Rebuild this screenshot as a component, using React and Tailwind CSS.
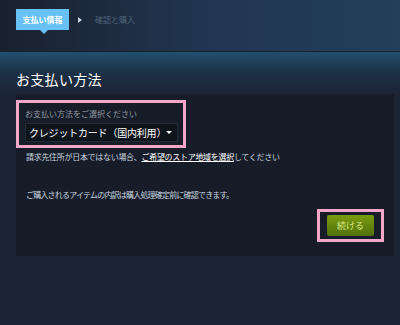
export default function App() {
  const font = { fontFamily: '"Noto Sans CJK JP", "Noto Sans", sans-serif' };
  return (
    <div
      className="w-[400px] h-[325px] overflow-hidden bg-[#1b2535] text-[#c6d4df]"
      style={font}
    >
      {/* step bar */}
      <div className="h-[52px] bg-gradient-to-r from-[#19212e] via-[#213550] to-[#233f5a] border-b border-[#18222f] flex items-start pl-4 pt-[9px]">
        <div className="relative h-[21px] w-[53px] bg-[#67c1f5] flex items-center justify-center text-[8px] font-bold text-white leading-none">
          支払い情報
          <span className="absolute left-[24px] -bottom-[4px] w-0 h-0 border-l-[4px] border-r-[4px] border-t-[4px] border-l-transparent border-r-transparent border-t-[#67c1f5]" />
        </div>
        <div className="h-[21px] flex items-center ml-[9px]">
          <span className="w-0 h-0 border-t-[3px] border-b-[3px] border-l-[4px] border-t-transparent border-b-transparent border-l-[#c6d4df]" />
        </div>
        <div className="h-[21px] flex items-center ml-[13px] text-[8px] text-[#4f6378] leading-none">
          確認と購入
        </div>
      </div>

      {/* heading */}
      <div className="h-[42px] bg-gradient-to-b from-[#21506f] via-[#1c3046] to-[#1b2535] pl-4 flex items-end pb-[8px]">
        <h1 className="text-[14px] leading-none text-white tracking-[0.3px]">お支払い方法</h1>
      </div>

      {/* panel */}
      <div className="ml-4 mr-[6px] h-[162px] bg-[#161d29] pt-[6px] flex flex-col">
        <div className="w-[170px] h-[48px] border-[3px] border-[#f3a6c9] pl-[6px] pt-[5px]">
          <div className="text-[8px] leading-[12px] text-[#8f98a0]">お支払い方法をご選択ください</div>
          <div className="mt-[3px] w-[153px] h-[19px] bg-[#0e141c] border border-[#232d3a] flex items-center pl-[3px] pr-[5px] justify-between">
            <span className="text-[10px] leading-none text-white tracking-[-0.2px]">クレジットカード（国内利用）</span>
            <span className="w-0 h-0 border-l-[3px] border-r-[3px] border-t-[3px] border-l-transparent border-r-transparent border-t-white" />
          </div>
        </div>
        <p className="mt-[3px] pl-[10px] text-[8px] leading-[12px] tracking-[-0.3px]">
          請求先住所が日本ではない場合、
          <span className="text-white underline">ご希望のストア地域を選択</span>
          してください
        </p>
        <p className="mt-[26px] pl-[10px] text-[8px] leading-[12px] tracking-[-0.8px]">
          ご購入されるアイテムの内訳は購入処理確定前に確認できます。
        </p>
        <div className="mt-[8px] flex justify-end pr-[10px]">
          <div className="w-[67px] h-[33px] border-[3px] border-[#f3a6c9] flex items-center justify-center">
            <button className="w-[47px] h-[21px] rounded-[2px] bg-gradient-to-b from-[#7a9c10] to-[#51700b] text-[9px] leading-none text-[#d2e885]">
              続ける
            </button>
          </div>
        </div>
      </div>
    </div>
  );
}
